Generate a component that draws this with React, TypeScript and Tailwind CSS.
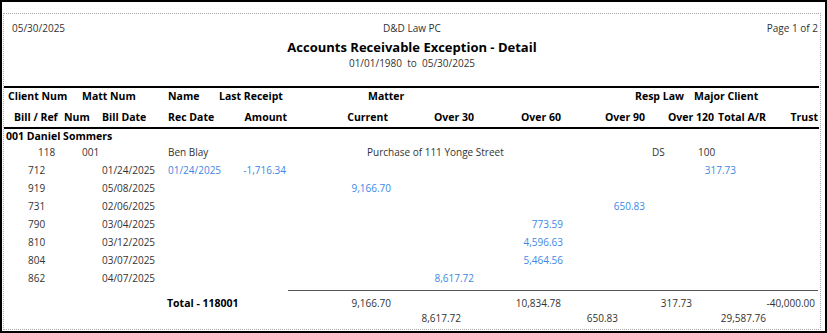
// Accounts Receivable Exception - Detail report page
type Bill = {
  bill: string;
  date: string;
  rec?: string;
  amt?: string;
  cur?: string;
  o30?: string;
  o60?: string;
  o90?: string;
  o120?: string;
};

const bills: Bill[] = [
  { bill: '712', date: '01/24/2025', rec: '01/24/2025', amt: '-1,716.34', o120: '317.73' },
  { bill: '919', date: '05/08/2025', cur: '9,166.70' },
  { bill: '731', date: '02/06/2025', o90: '650.83' },
  { bill: '790', date: '03/04/2025', o60: '773.59' },
  { bill: '810', date: '03/12/2025', o60: '4,596.63' },
  { bill: '804', date: '03/07/2025', o60: '5,464.56' },
  { bill: '862', date: '04/07/2025', o30: '8,617.72' },
];

function R({ className, children }: { className: string; children?: React.ReactNode }) {
  return <div className={`flex justify-end whitespace-nowrap shrink-0 ${className}`}>{children}</div>;
}

export default function App() {
  return (
    <div className="w-[827px] h-[333px] border-2 border-black bg-white overflow-hidden font-['Open_Sans','Noto_Sans',sans-serif] text-[10px] text-[#333]">
      <div className="ml-px mt-[11px] w-[818px] h-[317px] border border-dotted border-[#a8a8a8]">
        {/* Report header */}
        <div className="h-[72px] pt-[5px]">
          <div className="grid grid-cols-3 h-[18px] leading-[18px]">
            <div className="pl-[8px]">05/30/2025</div>
            <div className="text-center">D&amp;D Law PC</div>
            <div className="text-right pr-[2px]">Page 1 of 2</div>
          </div>
          <div className="text-center leading-[20px] text-[13px] font-bold text-black">
            Accounts Receivable Exception - Detail
          </div>
          <div className="text-center leading-[12px] whitespace-pre">01/01/1980  to  05/30/2025</div>
        </div>
        <div className="h-[2px] bg-black mr-px" />

        {/* Column headings */}
        <div className="flex h-[16px] leading-[16px] pl-[4px] font-bold text-black text-[10.5px] whitespace-nowrap">
          <div className="w-[74px] shrink-0">Client Num</div>
          <div className="w-[86px] shrink-0">Matt Num</div>
          <div className="w-[51px] shrink-0">Name</div>
          <div className="w-[149px] shrink-0">Last Receipt</div>
          <div className="w-[267px] shrink-0">Matter</div>
          <div className="w-[59px] shrink-0">Resp Law</div>
          <div>Major Client</div>
        </div>
        <div className="flex h-[23px] pt-[4px] leading-[19px] pl-[10px] font-bold text-black text-[10.5px] whitespace-nowrap">
          <div className="w-[50px] shrink-0">Bill / Ref</div>
          <div className="w-[38px] shrink-0">Num</div>
          <div className="w-[66px] shrink-0">Bill Date</div>
          <div className="w-[52px] shrink-0">Rec Date</div>
          <R className="w-[67px]">Amount</R>
          <R className="w-[101px]">Current</R>
          <R className="w-[86px]">Over 30</R>
          <R className="w-[87px]">Over 60</R>
          <R className="w-[84px]">Over 90</R>
          <R className="w-[69px]">Over 120</R>
          <R className="w-[52px]">Total A/R</R>
          <R className="w-[52px]">Trust</R>
        </div>
        <div className="h-[2px] bg-black mr-px" />

        {/* Client group */}
        <div className="h-[14px] leading-[14px] pl-[2px] font-bold text-black text-[10.5px]">001 Daniel Sommers</div>
        <div className="flex h-[18px] leading-[18px] pl-[34px] whitespace-nowrap">
          <div className="w-[44px] shrink-0">118</div>
          <div className="w-[86px] shrink-0">001</div>
          <div className="w-[199px] shrink-0">Ben Blay</div>
          <div className="w-[285px] shrink-0">Purchase of 111 Yonge Street</div>
          <div className="w-[46px] shrink-0">DS</div>
          <div>100</div>
        </div>
        {bills.map(b => (
          <div key={b.bill} className="flex h-[18px] leading-[18px] pl-[24px] whitespace-nowrap">
            <div className="w-[74px] shrink-0">{b.bill}</div>
            <div className="w-[66px] shrink-0">{b.date}</div>
            <div className="w-[52px] shrink-0 text-[#3d88e4]">{b.rec}</div>
            <R className="w-[66px] text-[#3d88e4]">{b.amt}</R>
            <R className="w-[105px] text-[#3d88e4]">{b.cur}</R>
            <R className="w-[83px] text-[#3d88e4]">{b.o30}</R>
            <R className="w-[89px] text-[#3d88e4]">{b.o60}</R>
            <R className="w-[82px] text-[#3d88e4]">{b.o90}</R>
            <R className="w-[91px] text-[#3d88e4]">{b.o120}</R>
          </div>
        ))}

        {/* Totals */}
        <div className="mt-[3px] h-px ml-[284px] w-[530px] bg-[#555]" />
        <div className="flex pt-[4px] leading-[16px] pl-[163px] whitespace-nowrap">
          <div className="w-[123px] shrink-0 font-bold text-black text-[10.5px]">Total - 118001</div>
          <R className="w-[101px]">9,166.70</R>
          <R className="w-[170px]">10,834.78</R>
          <R className="w-[131px]">317.73</R>
          <R className="w-[123px]">-40,000.00</R>
        </div>
        <div className="flex leading-[14px] whitespace-nowrap">
          <R className="w-[457px]">8,617.72</R>
          <R className="w-[157px]">650.83</R>
          <R className="w-[148px]">29,587.76</R>
        </div>
      </div>
    </div>
  );
}
